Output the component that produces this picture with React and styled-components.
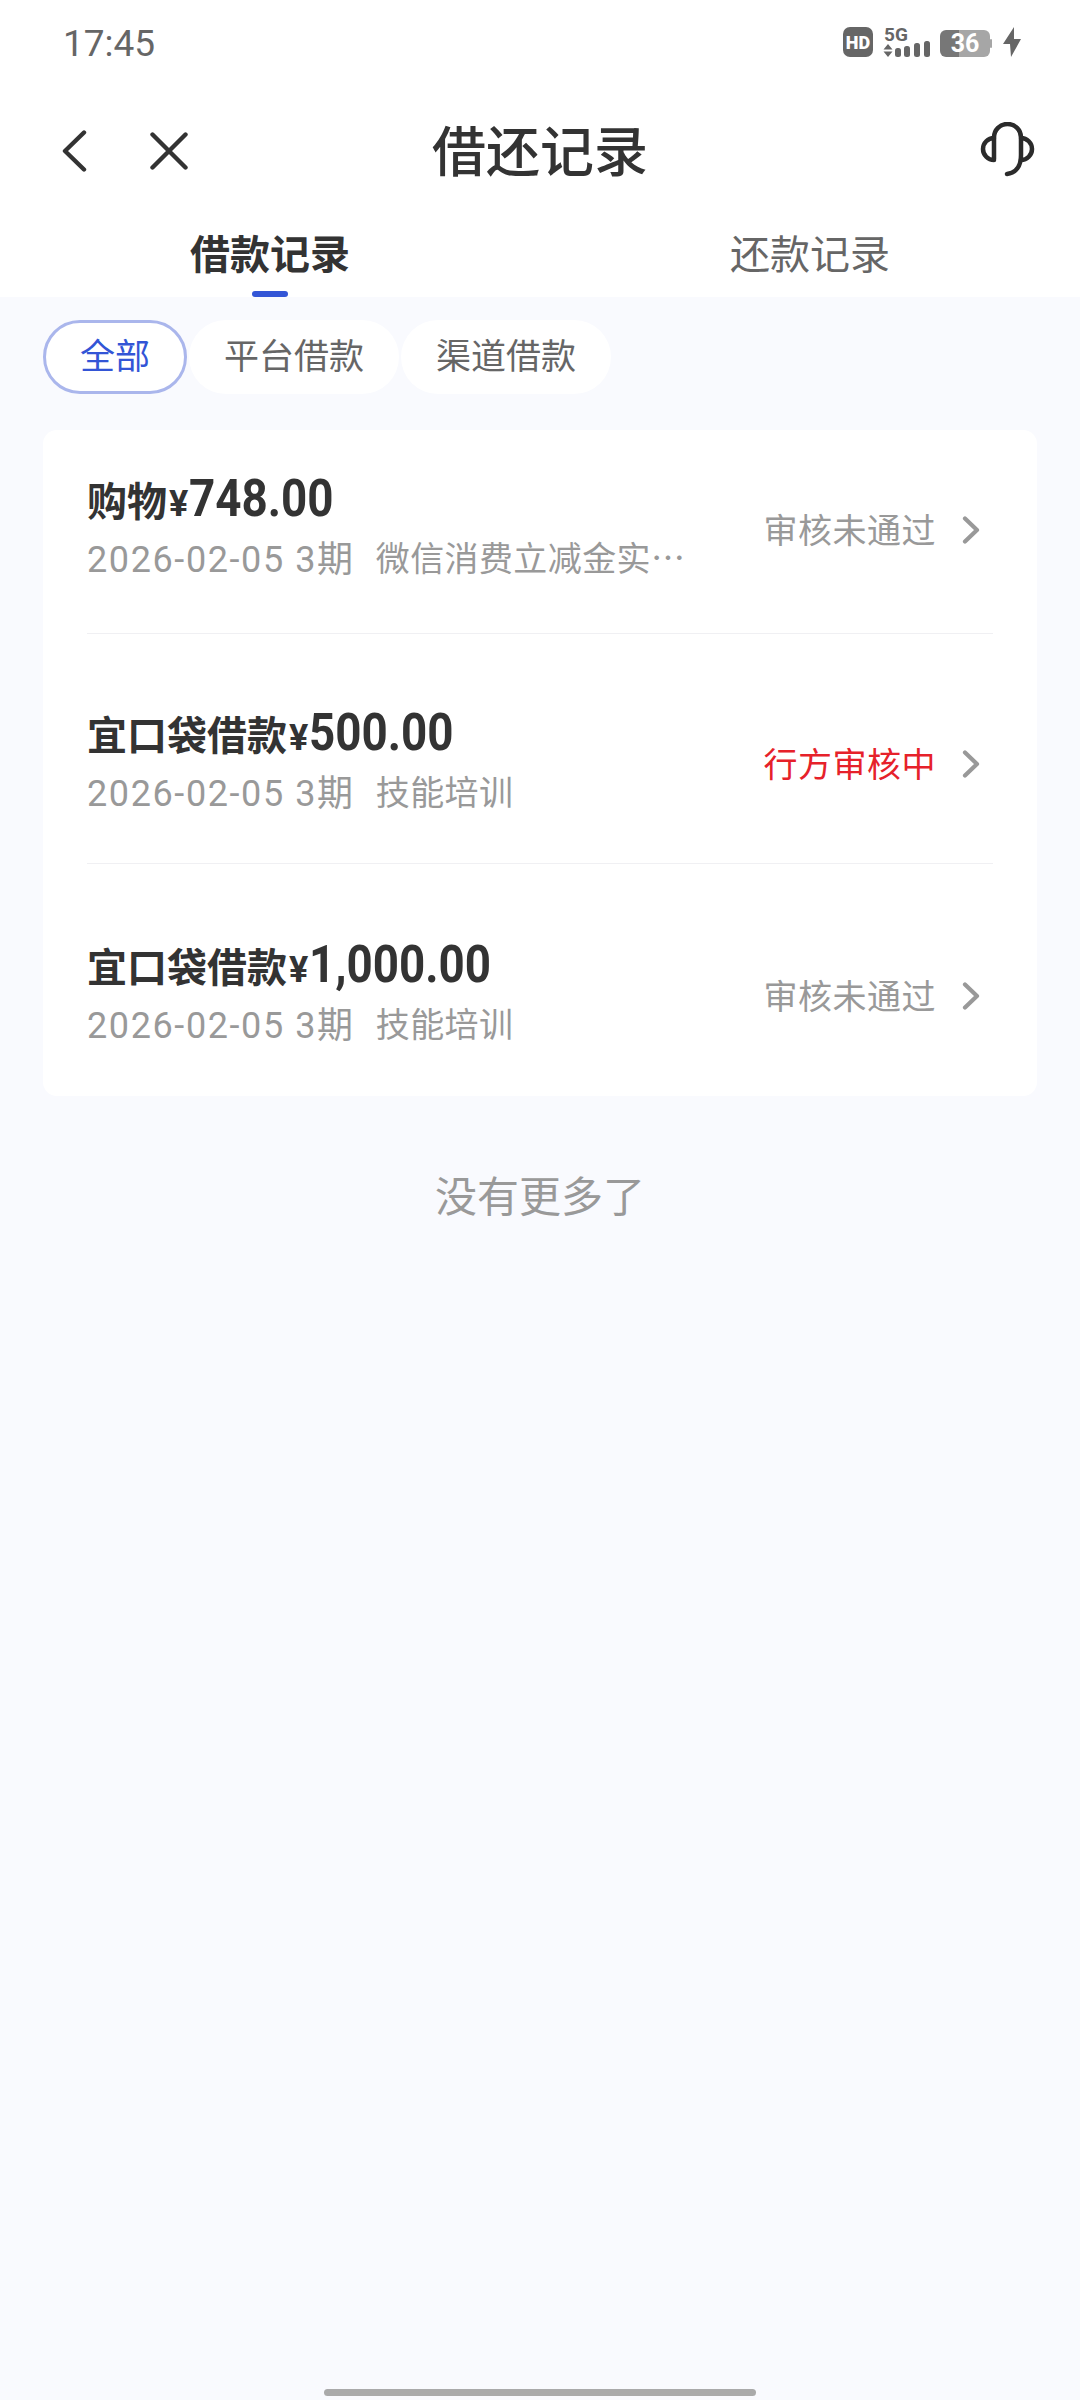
import React from "react";
import styled, { createGlobalStyle } from "styled-components";

const GlobalStyle = createGlobalStyle`
  html, body {
    margin: 0;
    padding: 0;
    background: #f9fafe;
  }
  body {
    font-family: Roboto, "Noto Sans CJK SC", sans-serif;
  }
`;

const Page = styled.div`
  display: flex;
  flex-direction: column;
  width: 1080px;
  height: 2400px;
  overflow: hidden;
  background: #f9fafe;
`;

const Top = styled.header`
  background: #fff;
`;

const StatusBar = styled.div`
  display: flex;
  align-items: center;
  justify-content: space-between;
  height: 88px;
  padding: 0 57px 0 63px;
`;

const Time = styled.span`
  font-size: 37px;
  line-height: 44px;
  color: #666;
`;

const StatusIcons = styled.div`
  display: flex;
  align-items: center;
  margin-top: -8px;
`;

const NavBar = styled.nav`
  display: grid;
  grid-template-columns: 1fr auto 1fr;
  align-items: center;
  height: 132px;
  padding: 0 44px;
`;

const NavLeft = styled.div`
  display: flex;
  align-items: center;
  gap: 63px;
  padding: 0 0 6px 18px;
`;

const NavRight = styled.div`
  display: flex;
  justify-content: flex-end;
  padding-bottom: 8px;
`;

const Title = styled.h1`
  margin: 0;
  font-size: 54px;
  line-height: 64px;
  font-weight: 500;
  color: #333;
`;

const Tabs = styled.div`
  display: flex;
`;

const Tab = styled.div`
  flex: 1;
  display: flex;
  flex-direction: column;
  align-items: center;
  gap: 15px;
  padding-top: 16px;
  font-size: 40px;
  line-height: 40px;
  font-weight: ${p => (p.$active ? 700 : 400)};
  color: ${p => (p.$active ? "#333" : "#666")};
`;

const TabMark = styled.span`
  width: 36px;
  height: 6px;
  border-radius: 3px;
  background: ${p => (p.$active ? "#3355d6" : "transparent")};
`;

const Main = styled.main`
  flex: 1;
  padding: 23px 43px 0;
`;

const Chips = styled.div`
  display: flex;
  gap: 2px;
`;

const Chip = styled.div`
  box-sizing: border-box;
  height: 74px;
  padding: 0 ${p => (p.$active ? "34px" : "32px")} 8px;
  display: flex;
  align-items: center;
  border-radius: 37px;
  background: #fff;
  border: 3px solid ${p => (p.$active ? "#aab6ec" : "transparent")};
  font-size: 35px;
  color: ${p => (p.$active ? "#3355d6" : "#666")};
`;

const Card = styled.section`
  margin-top: 36px;
  padding: 0 44px;
  background: #fff;
  border-radius: 14px;
`;

const Row = styled.div`
  display: flex;
  align-items: center;
  justify-content: space-between;
  padding: 71px 13px 52px 0;
  border-bottom: 1px solid #f0f0f3;

  &:first-child {
    padding: 41px 13px 56px 0;
  }

  &:last-child {
    padding: 73px 13px 53px 0;
    border-bottom: none;
  }
`;

const Info = styled.div`
  display: flex;
  flex-direction: column;
  gap: 8px;
`;

const Amount = styled.div`
  display: flex;
  align-items: baseline;
  height: 56px;
  font-size: 40px;
  line-height: 56px;
  font-weight: 700;
  color: #333;
`;

const Yen = styled.span`
  font-size: 36px;
  margin: 0 1px 0 2px;
`;

/* the amount digits are a condensed face in the app, squeeze Roboto to match */
const Figure = styled.span`
  display: inline-block;
  font-size: 52px;
  transform: scaleX(0.88);
  transform-origin: left center;
`;

const Meta = styled.div`
  display: flex;
  align-items: center;
  gap: 21px;
  height: 42px;
  color: #999;
  white-space: nowrap;
`;

const MetaDate = styled.span`
  font-size: 36px;
  letter-spacing: 1.6px;
`;

const MetaNote = styled.span`
  font-family: "Noto Sans CJK SC", sans-serif;
  font-size: 34px;
  letter-spacing: 0.4px;
`;

const Status = styled.div`
  display: flex;
  align-items: center;
  gap: 26px;
  margin-top: 8px;
  font-size: 34px;
  letter-spacing: 0.5px;
  color: ${p => (p.$pending ? "#e6212a" : "#999")};

  svg {
    margin-top: 4px;
  }
`;

const NoMore = styled.div`
  margin-top: 78px;
  text-align: center;
  font-size: 42px;
  line-height: 48px;
  color: #999;
`;

const HomeBar = styled.div`
  align-self: center;
  width: 432px;
  height: 7px;
  margin-bottom: 4px;
  border-radius: 4px;
  background: #aaa;
`;

const BackIcon = () => (
  <svg width="25" height="42" viewBox="0 0 25 42" fill="none">
    <path d="M22 2.500 3 21l19 18.500" stroke="#333" strokeWidth="4.400" strokeLinecap="round" strokeLinejoin="round" />
  </svg>
);

const CloseIcon = () => (
  <svg width="38" height="38" viewBox="0 0 38 38" fill="none">
    <path d="M2.500 2.500l33 33M35.500 2.500l-33 33" stroke="#333" strokeWidth="4.400" strokeLinecap="round" />
  </svg>
);

const HeadsetIcon = () => (
  <svg width="56" height="56" viewBox="0 0 56 56" fill="none" stroke="#2b2b2b" strokeWidth="4.500" strokeLinecap="round">
    <path d="M14 37V15.500a13.500 13.500 0 0 1 27 0V33c0 11-5 18-14 19" />
    <path d="M14 16a11 11 0 0 0 0 22M41 16a11 11 0 0 1 0 22" />
  </svg>
);

const ChevronIcon = () => (
  <svg width="18" height="28" viewBox="0 0 18 28" fill="none">
    <path d="M3 2.500 15 14 3 25.500" stroke="#999" strokeWidth="4.200" strokeLinecap="round" strokeLinejoin="round" />
  </svg>
);

const StatusGlyphs = () => (
  <svg width="182" height="36" viewBox="0 -4 182 36">
    <defs>
      <linearGradient id="cell" x1="0" x2="1" y1="0" y2="0">
        <stop offset="0.37" stopColor="#777" />
        <stop offset="0.38" stopColor="#a6a6a6" />
      </linearGradient>
    </defs>
    <rect x="2" y="1" width="30" height="30" rx="7" fill="#666" />
    <text x="17" y="22.500" textAnchor="middle" fontFamily="Roboto, sans-serif" fontWeight="900" fontSize="18" fill="#fff">HD</text>
    <text x="43" y="15" fontFamily="Roboto, sans-serif" fontWeight="700" fontSize="19" fill="#666">5G</text>
    <path d="M47 18l4.500 5.500h-9zM47 31l4.500-5.500h-9z" fill="#666" />
    <rect x="54" y="22" width="6" height="9" rx="2.500" fill="#666" />
    <rect x="63" y="20" width="6" height="11" rx="2.500" fill="#666" />
    <rect x="73" y="17" width="6" height="14" rx="2.500" fill="#666" />
    <rect x="83" y="15" width="6" height="16" rx="2.500" fill="#666" />
    <rect x="99" y="4" width="50" height="27" rx="6" fill="url(#cell)" />
    <rect x="149" y="13" width="2" height="9" rx="1" fill="#a6a6a6" />
    <text x="124" y="26" textAnchor="middle" fontFamily="Roboto, sans-serif" fontWeight="700" fontSize="25" fill="#fff">36</text>
    <path d="M173 1l-11 17h7l1 13 10-18h-7z" fill="#666" />
  </svg>
);

const loans = [
  { name: "购物", amount: "748.00", note: "微信消费立减金实…", status: "审核未通过" },
  { name: "宜口袋借款", amount: "500.00", note: "技能培训", status: "行方审核中", pending: true },
  { name: "宜口袋借款", amount: "1,000.00", note: "技能培训", status: "审核未通过" },
];

const App = () => (
  <Page>
    <GlobalStyle />
    <Top>
      <StatusBar>
        <Time>17:45</Time>
        <StatusIcons>
          <StatusGlyphs />
        </StatusIcons>
      </StatusBar>
      <NavBar>
        <NavLeft>
          <BackIcon />
          <CloseIcon />
        </NavLeft>
        <Title>借还记录</Title>
        <NavRight>
          <HeadsetIcon />
        </NavRight>
      </NavBar>
      <Tabs>
        <Tab $active>
          借款记录
          <TabMark $active />
        </Tab>
        <Tab>
          还款记录
          <TabMark />
        </Tab>
      </Tabs>
    </Top>
    <Main>
      <Chips>
        <Chip $active>全部</Chip>
        <Chip>平台借款</Chip>
        <Chip>渠道借款</Chip>
      </Chips>
      <Card>
        {loans.map((loan, i) => (
          <Row key={i}>
            <Info>
              <Amount>
                {loan.name}
                <Yen>¥</Yen>
                <Figure>{loan.amount}</Figure>
              </Amount>
              <Meta>
                <MetaDate>2026-02-05 3期</MetaDate>
                <MetaNote>{loan.note}</MetaNote>
              </Meta>
            </Info>
            <Status $pending={loan.pending}>
              {loan.status}
              <ChevronIcon />
            </Status>
          </Row>
        ))}
      </Card>
      <NoMore>没有更多了</NoMore>
    </Main>
    <HomeBar />
  </Page>
);

export default App;
